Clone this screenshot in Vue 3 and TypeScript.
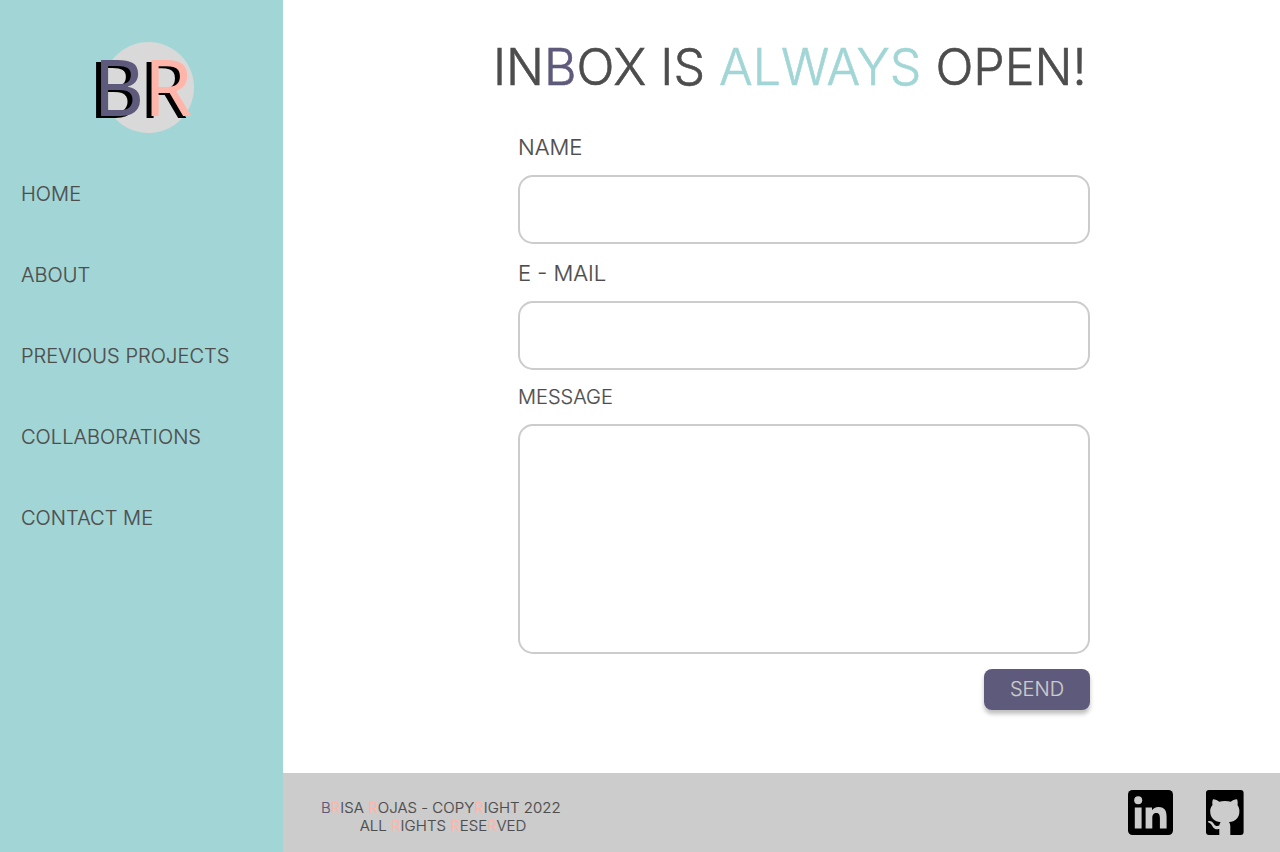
<script setup lang="ts">
import { ref } from 'vue'

type Tone = 'plum' | 'peach' | 'aqua' | ''
interface Piece { text: string; tone: Tone }

const links: string[] = ['HOME', 'ABOUT', 'PREVIOUS PROJECTS', 'COLLABORATIONS', 'CONTACT ME']

const heading: Piece[] = [
  { text: 'IN', tone: '' },
  { text: 'B', tone: 'plum' },
  { text: 'OX IS ', tone: '' },
  { text: 'ALWAYS', tone: 'aqua' },
  { text: ' OPEN!', tone: '' },
]

const legal: Piece[][] = [
  [
    { text: 'B', tone: 'plum' },
    { text: 'R', tone: 'peach' },
    { text: 'ISA ', tone: '' },
    { text: 'R', tone: 'peach' },
    { text: 'OJAS - COPY', tone: '' },
    { text: 'R', tone: 'peach' },
    { text: 'IGHT 2022', tone: '' },
  ],
  [
    { text: ' ALL ', tone: '' },
    { text: 'R', tone: 'peach' },
    { text: 'IGHTS ', tone: '' },
    { text: 'R', tone: 'peach' },
    { text: 'ESE', tone: '' },
    { text: 'R', tone: 'peach' },
    { text: 'VED', tone: '' },
  ],
]

const name = ref('')
const email = ref('')
const message = ref('')
</script>

<template>
  <div class="page">
    <aside class="sidebar">
      <div class="logo"><span class="initials"><span class="plum">B</span><span class="peach">R</span></span></div>
      <nav class="nav">
        <a v-for="link in links" :key="link" class="nav-link">{{ link }}</a>
      </nav>
    </aside>

    <div class="content">
      <main class="main">
        <h1 class="title"><span v-for="(p, i) in heading" :key="i" :class="p.tone">{{ p.text }}</span></h1>
        <form class="form" @submit.prevent>
          <label class="label" for="name">NAME</label>
          <input id="name" v-model="name" class="field" type="text" />
          <label class="label" for="email">E - MAIL</label>
          <input id="email" v-model="email" class="field last" type="text" />
          <label class="label small" for="message">MESSAGE</label>
          <textarea id="message" v-model="message" class="field area"></textarea>
          <button class="send" type="submit">SEND</button>
        </form>
      </main>

      <footer class="footer">
        <p class="legal">
          <span v-for="(line, n) in legal" :key="n" class="legal-line"><span v-for="(p, i) in line" :key="i" :class="p.tone">{{ p.text }}</span></span>
        </p>
        <div class="social">
          <svg width="45" height="45" viewBox="0 0 45 45" aria-label="LinkedIn">
            <rect width="45" height="45" rx="4.5" fill="#000" />
            <g fill="#cccccc">
              <circle cx="10.2" cy="10.2" r="4" />
              <path d="M6.8 17.4h6.8v21.2H6.8zM17.6 17.4h6.4v2.9c1.2-2.1 3.4-3.4 6.5-3.4 6.6 0 8.1 4.2 8.1 10v11.7h-6.7V28.3c0-2.7-.4-5.4-3.6-5.4-3.4 0-4 2.6-4 5.3v10.4h-6.7z" />
            </g>
          </svg>
          <svg width="38" height="45" viewBox="0 0 38 45" aria-label="GitHub">
            <rect width="37.6" height="45" rx="3" fill="#000" />
            <path fill="#cccccc" d="M7 9.3c2.5 0 4.5 1.1 6.2 2.4 3.5-.8 8-.8 11.6 0 1.7-1.3 3.7-2.4 6.2-2.4.8 2 .9 4 .5 5.7 1.3 1.9 1.9 3.9 1.9 6.3 0 7-4.2 10.2-10.5 11 1 .9 1.4 2.2 1.4 3.9V45h-11v-5.9c-3.4.5-5.7-.3-7-3.2-.9-2-2.2-2.9-3.8-3.500-1-.8-.5-1.400.7-1.400 2.200 0 3.700 1.300 4.700 3 1.300 2.200 3.300 2.500 5.400 1.600.2-1.400.7-2.600 1.500-3.300C8.400 31.500 4.200 28.300 4.200 21.300c0-2.400.6-4.400 2.300-6.300-.4-1.700-.3-3.700.5-5.700z" />
          </svg>
        </div>
      </footer>
    </div>
  </div>
</template>

<style>
body { margin: 0; background: #fff; }
</style>

<style scoped>
.page {
  display: flex;
  height: 852px;
  overflow: hidden;
  font-family: Inter, "Liberation Sans", sans-serif;
  font-weight: 300;
  -webkit-text-stroke: 0.2px currentColor;
  color: #4d4d4d;
}
.plum { color: #5e5a7b; }
.peach { color: #ffb6aa; }
.aqua { color: #a2d6d6; }
.plum, .peach, .aqua { -webkit-text-stroke-color: currentColor; }

.sidebar {
  width: 283px;
  flex: none;
  background: #a2d6d6;
}
.logo {
  display: flex;
  justify-content: center;
  align-items: center;
  width: 91px;
  height: 91px;
  margin: 42px 0 0 103px;
  border-radius: 50%;
  background: #d9d9d9;
}
.initials {
  flex: none;
  margin: -4px 0 0 -11px;
  font: 400 78px/90px "Noto Sans", sans-serif;
  -webkit-text-stroke-width: 0;
  text-shadow: -5px 2px 0 #000;
}
.nav {
  display: flex;
  flex-direction: column;
  gap: 57px;
  margin: 49px 0 0 21px;
}
.nav-link {
  font-size: 20px;
  line-height: 24px;
  letter-spacing: 0.05px;
  white-space: nowrap;
}

.content {
  flex: 1;
  display: flex;
  flex-direction: column;
}
.main { flex: 1; }
.title {
  margin: 37px 0 0 210px;
  font-size: 50px;
  line-height: 61px;
  font-weight: 300;
  -webkit-text-stroke-width: 0.6px;
  white-space: pre;
}
.form {
  display: flex;
  flex-direction: column;
  width: 572px;
  margin: 36px 0 0 235px;
}
.label {
  height: 41px;
  font-size: 22px;
  line-height: 27px;
}
.label.small {
  height: 39px;
  font-size: 20px;
  line-height: 24px;
}
.field {
  box-sizing: border-box;
  width: 100%;
  height: 69px;
  margin: 0 0 16px;
  padding: 0 16px;
  border: 2px solid #cccccc;
  border-radius: 15px;
  background: #fff;
  font: inherit;
  font-size: 20px;
  color: inherit;
  outline: none;
}
.field.last { margin-bottom: 15px; }
.area {
  height: 230px;
  margin: 0 0 15px;
  padding: 16px;
  resize: none;
}
.send {
  align-self: flex-end;
  width: 106px;
  height: 41px;
  padding: 0 0 1px;
  border: 0;
  border-radius: 8px;
  background: #5e5a7b;
  box-shadow: 0 4px 4px rgba(0, 0, 0, 0.25);
  font: inherit;
  font-size: 20px;
  line-height: 24px;
  color: #cccccc;
  -webkit-text-stroke-color: #cccccc;
}

.footer {
  display: flex;
  justify-content: space-between;
  box-sizing: border-box;
  height: 79px;
  padding: 17px 36px 0 38px;
  background: #cccccc;
}
.legal {
  margin: 9px 0 0;
  font-size: 15px;
  line-height: 18px;
  letter-spacing: 0.03px;
  text-align: center;
}
.legal-line {
  display: block;
  white-space: pre;
}
.social {
  display: flex;
  gap: 33px;
}
</style>
